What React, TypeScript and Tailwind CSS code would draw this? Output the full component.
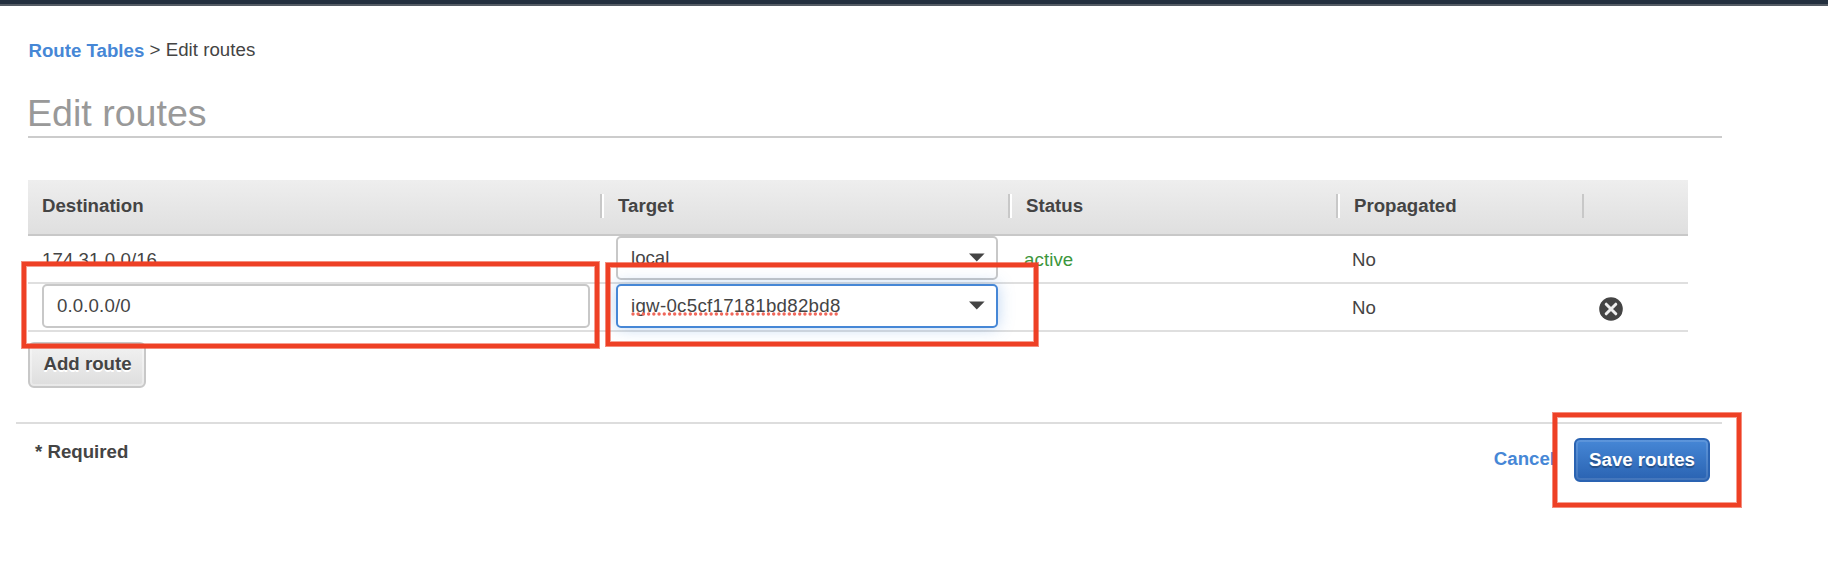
import React from "react";

const FONT = "font-['Liberation_Sans',Arial,sans-serif]";

function HeaderCell({ children, white = true }: { children?: React.ReactNode; white?: boolean }) {
  return (
    <div className="flex h-full items-start pt-[14px]">
      <span className={white ? "h-6 w-1 shrink-0 border-l-2 border-r-2 border-l-[#c8c8c8] border-r-white" : "h-6 w-[2px] shrink-0 bg-[#c8c8c8]"} />
      <span className="ml-[14px] leading-[24px] font-bold">{children}</span>
    </div>
  );
}

function Caret() {
  return (
    <svg width="16" height="9" viewBox="0 0 16 9" className="mr-[11px] mb-[2px] shrink-0">
      <path d="M0 0.5H15.6L7.8 8.6Z" fill="#444" />
    </svg>
  );
}

const GRID = "grid grid-cols-[572px_408px_328px_246px_106px]";

function Mark({ className }: { className: string }) {
  return <div className={"pointer-events-none absolute border-4 border-[#ee4025] shadow-[0_0_0_1px_rgba(238,64,37,0.6),inset_0_0_0_1px_rgba(238,64,37,0.5)] " + className} />;
}

export default function App() {
  return (
    <div className={"relative h-[578px] w-[1828px] overflow-hidden bg-white text-[18.67px] text-[#444] " + FONT}>
      <div className="h-[6px] border-b-2 border-[#545b64] bg-[#232f3e]" />
      <nav className="mt-[32px] ml-[28.5px] flex h-6 items-center whitespace-pre leading-[24px]">
        <a className="mt-[2px] font-bold text-[#4687d6]">Route Tables</a>
        <span className="tracking-[0.04px]"> &gt; Edit routes</span>
      </nav>
      <h1 className="ml-[28px] flex h-[76px] w-[1694px] items-end border-b-2 border-[#ccc] pb-[2px] text-[37.6px] leading-[42px] text-[#999]">
        <span className="-ml-px">Edit routes</span>
      </h1>

      <section className="mt-[42px] ml-[28px] w-[1660px]">
        <div className={GRID + " h-[56px] border-b-2 border-[#c8c8c8] bg-linear-to-b from-[#eee] to-[#dfdfdf]"}>
          <div className="pt-[14px] pl-[14px] leading-[24px] font-bold">Destination</div>
          <HeaderCell>Target</HeaderCell>
          <HeaderCell>Status</HeaderCell>
          <HeaderCell>Propagated</HeaderCell>
          <HeaderCell white={false} />
        </div>
        <div className={GRID + " h-[48px] border-b-2 border-[#dfdfdf] leading-[47px]"}>
          <div className="pl-[14px] tracking-[0.07px]">174.31.0.0/16</div>
          <div className="pl-4">
            <div className="flex h-[44px] w-[382px] items-center justify-between rounded-[5px] border-2 border-[#c8c8c8] bg-white pl-[13px] leading-[40px]">
              <span>local</span>
              <Caret />
            </div>
          </div>
          <div className="pl-4 tracking-[0.1px] text-[#3c963c]">active</div>
          <div className="pl-4">No</div>
          <div />
        </div>
        <div className={GRID + " h-[48px] border-b-2 border-[#dfdfdf] leading-[47px]"}>
          <div className="pl-[14px]">
            <div className="h-[44px] w-[548px] rounded-[5px] border-2 border-[#c8c8c8] bg-white pl-[13px] leading-[40px] tracking-[0.12px]">0.0.0.0/0</div>
          </div>
          <div className="pl-4">
            <div className="flex h-[44px] w-[382px] items-center justify-between rounded-[5px] border-2 border-[#4687d6] bg-white pl-[13px] leading-[40px] shadow-[0_0_16px_rgba(70,135,214,0.35)]">
              <span className="relative tracking-[0.3px]">
                igw-0c5cf17181bd82bd8
                <svg className="absolute left-0 top-[26px]" width="214" height="4">
                  <line x1="2" y1="2" x2="210" y2="2" stroke="#f0675a" strokeWidth="3.4" strokeLinecap="round" strokeDasharray="0.01 5.2" />
                </svg>
              </span>
              <Caret />
            </div>
          </div>
          <div />
          <div className="pl-4">No</div>
          <div className="pt-[13px] pl-[17px]">
            <svg width="24" height="24" viewBox="0 0 24 24">
              <circle cx="12" cy="12" r="11.8" fill="#444" />
              <path d="M7.2 7.2L16.8 16.8M16.8 7.2L7.2 16.8" stroke="#eee" strokeWidth="3" strokeLinecap="round" />
            </svg>
          </div>
        </div>
      </section>

      <button className="mt-[10px] ml-[28px] block h-[46px] w-[118px] rounded-[6px] border-2 border-[#c8c8c8] bg-linear-to-b from-[#f2f2f2] to-[#dedede] pb-[2px] pl-px font-bold shadow-[inset_0_0_0_2px_rgba(255,255,255,0.35)] [text-shadow:0_2px_0_#fff]">
        Add route
      </button>

      <footer className="mt-[34px] ml-[16px] flex h-[60px] w-[1706px] items-start justify-between border-t-2 border-[#ddd] font-bold">
        <span className="mt-[16px] ml-[19px] leading-[24px]">* Required</span>
        <div className="flex pr-3">
          <a className="mt-[23px] mr-[19px] leading-[24px] text-[#4687d6]">Cancel</a>
          <button className="mt-[14px] h-[44px] w-[136px] rounded-[6px] border-2 border-[#2a63b2] bg-linear-to-b from-[#4687d6] to-[#2a63b2] text-white shadow-[inset_0_0_0_2px_rgba(255,255,255,0.12)] [text-shadow:0_2px_1px_rgba(0,0,0,0.3)]">
            Save routes
          </button>
        </div>
      </footer>

      <Mark className="left-[22px] top-[262px] h-[86px] w-[577px]" />
      <Mark className="left-[606px] top-[263px] h-[83px] w-[432px]" />
      <Mark className="left-[1553px] top-[413px] h-[94px] w-[188px]" />
    </div>
  );
}
